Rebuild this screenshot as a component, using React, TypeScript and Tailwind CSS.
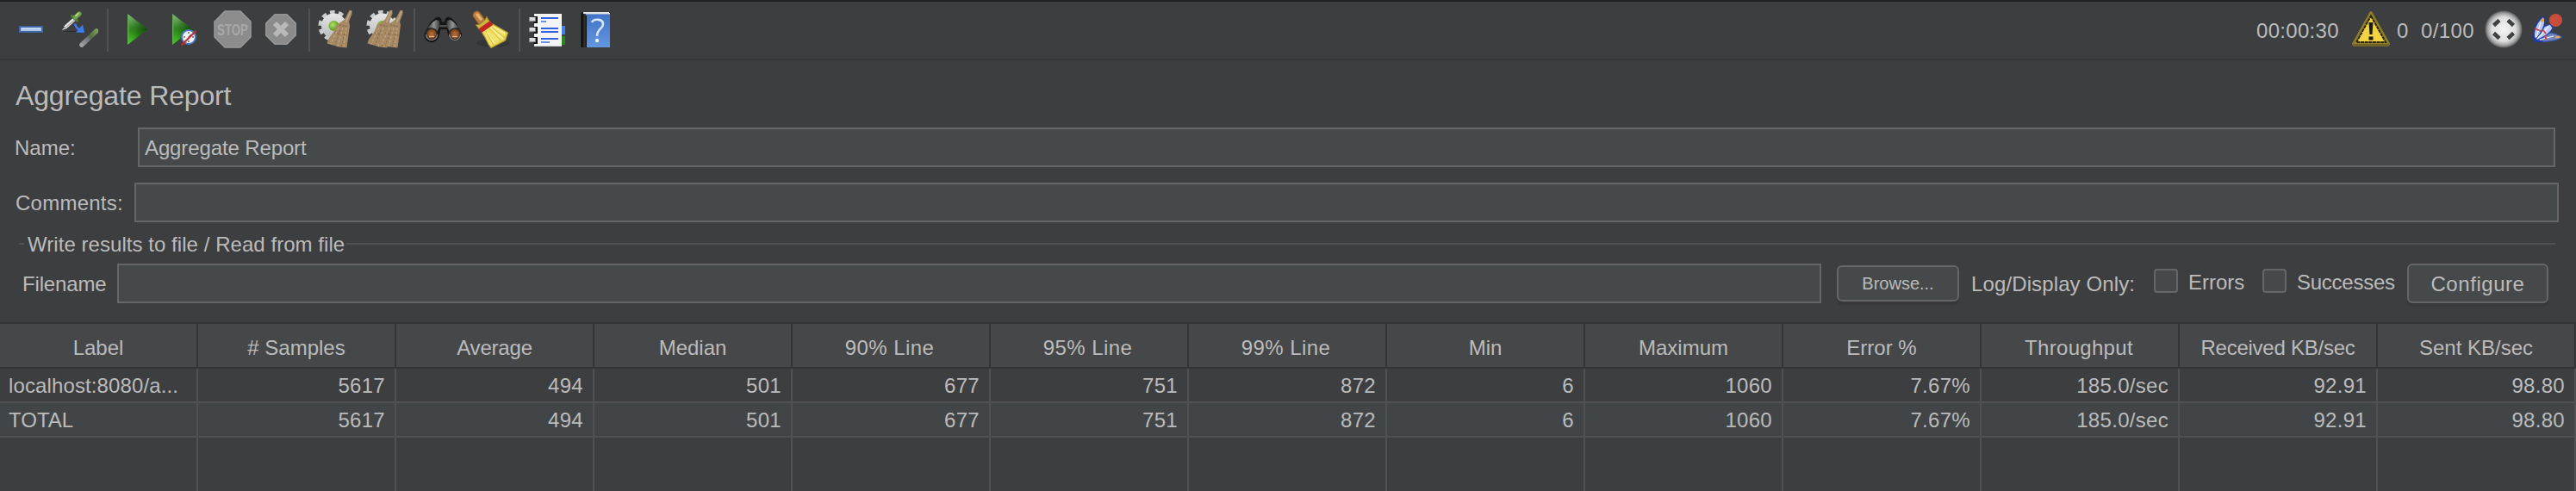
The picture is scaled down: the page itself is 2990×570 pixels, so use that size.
import React from "react";

type IconProps = { children: React.ReactNode; className?: string };

function Icon({ children, className = "" }: IconProps) {
  return (
    <svg viewBox="0 0 44 44" className={`h-11 w-11 shrink-0 ${className}`} fill="none">
      {children}
    </svg>
  );
}

function Separator({ className = "" }: { className?: string }) {
  return <div className={`mt-0.5 h-[50px] w-0.5 shrink-0 bg-[#505254] ${className}`} />;
}

function Gear() {
  return (
    <>
      <circle cx="19.500" cy="18" r="15.800" stroke="#cbcccd" strokeWidth="4.500" strokeDasharray="5.600 4.330" />
      <circle cx="19.500" cy="18" r="14.500" fill="url(#gear)" />
      <circle cx="19.500" cy="18" r="6" fill="url(#lime)" />
    </>
  );
}

function Broom() {
  return (
    <>
      <path
        d="M38.500 0h3v4l-3.500 9 1 4-1 8-2.500 18.500-9-1-14-4 1.500-5 6-8 4-9 5-3 4-3z"
        fill="#a58864"
      />
      <path d="M40 1l-5.500 13" stroke="#bda98a" strokeWidth="1.500" />
      <path d="M27 17l10 2M21 26l15 3" stroke="#86694a" strokeWidth="1.200" strokeDasharray="2 1.500" />
      <path d="M26 20l-9 19M31 20l-6 22M35 20l-3 22" stroke="#c2a47a" strokeWidth="1.300" strokeDasharray="3 2" />
      <path d="M28 23l-7 18M33 27l-4 15" stroke="#80643f" strokeWidth="0.900" strokeDasharray="2 2.500" />
    </>
  );
}

function Gradients() {
  return (
    <svg width="0" height="0" className="absolute">
      <defs>
        <linearGradient id="green" x1="0" y1="0" x2="0" y2="1">
          <stop offset="0" stopColor="#86b87c" />
          <stop offset="0.45" stopColor="#37852a" />
          <stop offset="0.55" stopColor="#2f8a1d" />
          <stop offset="1" stopColor="#49cc28" />
        </linearGradient>
        <linearGradient id="greenShade" x1="0" y1="0" x2="1" y2="0">
          <stop offset="0.2" stopColor="#0d4a06" stopOpacity="0" />
          <stop offset="1" stopColor="#0d3a06" stopOpacity="0.85" />
        </linearGradient>
        <linearGradient id="book" x1="0" y1="0" x2="0" y2="1">
          <stop offset="0" stopColor="#3f74c6" />
          <stop offset="1" stopColor="#6496e0" />
        </linearGradient>
        <linearGradient id="spine" x1="0" y1="0" x2="1" y2="0">
          <stop offset="0" stopColor="#4a4a4a" />
          <stop offset="0.3" stopColor="#0a0a0a" />
          <stop offset="0.7" stopColor="#333" />
          <stop offset="1" stopColor="#111" />
        </linearGradient>
        <radialGradient id="ball">
          <stop offset="0" stopColor="#f4f4f4" />
          <stop offset="0.65" stopColor="#dedede" />
          <stop offset="0.85" stopColor="#a6a6a6" />
          <stop offset="1" stopColor="#5c5d5e" />
        </radialGradient>
        <radialGradient id="lime" cx="0.4" cy="0.4">
          <stop offset="0" stopColor="#b4e070" />
          <stop offset="1" stopColor="#62a51c" />
        </radialGradient>
        <linearGradient id="gear" x1="0" y1="0" x2="0" y2="1">
          <stop offset="0" stopColor="#e6e6e6" />
          <stop offset="1" stopColor="#b9babb" />
        </linearGradient>
        <radialGradient id="lens">
          <stop offset="0" stopColor="#b5733d" />
          <stop offset="0.7" stopColor="#84491f" />
          <stop offset="1" stopColor="#4c2810" />
        </radialGradient>
        <linearGradient id="barrel" x1="0" y1="0" x2="1" y2="0">
          <stop offset="0" stopColor="#333" />
          <stop offset="0.5" stopColor="#929494" />
          <stop offset="1" stopColor="#303030" />
        </linearGradient>
        <linearGradient id="straw" x1="0" y1="0" x2="1" y2="1">
          <stop offset="0" stopColor="#eedc58" />
          <stop offset="0.6" stopColor="#f1e36d" />
          <stop offset="1" stopColor="#cdb531" />
        </linearGradient>
        <linearGradient id="faded" gradientUnits="userSpaceOnUse" x1="42" y1="23" x2="23" y2="42">
          <stop offset="0" stopColor="#7fa860" />
          <stop offset="0.4" stopColor="#54703f" />
          <stop offset="0.5" stopColor="#77797a" />
          <stop offset="1" stopColor="#b5b5b5" />
        </linearGradient>
      </defs>
    </svg>
  );
}

function Toolbar() {
  return (
    <header className="flex h-[70px] items-center border-t-2 border-b-2 border-t-[#1f2022] border-b-[#353638] pr-[15px] pb-0.5 pl-[14px]">
      <Gradients />

      <Icon>
        <rect x="9" y="19" width="26" height="6" fill="#adc6ea" stroke="#3f65a5" strokeWidth="2" />
        <path d="M11 20.800h22" stroke="#c9daf3" strokeWidth="1.600" />
      </Icon>
      <Icon className="ml-3">
        <path d="M6 24.500h15" stroke="#292b2b" strokeWidth="1" />
        <path d="M16 10.500L5.500 20" stroke="#e6e6e7" strokeWidth="4.200" />
        <path d="M7 18L1.500 23l5-1.500z" fill="#e6e6e7" />
        <path d="M16 11.500L5 21" stroke="#8b8d8e" strokeWidth="1" />
        <path d="M13.500 6.500l6 5.500" stroke="#4f7a33" strokeWidth="3.200" strokeLinecap="round" />
        <path d="M17.500 8L22 4" stroke="#6f9e48" strokeWidth="5.200" strokeLinecap="round" />
        <path d="M18 6.500L21 3.500" stroke="#b4d690" strokeWidth="1.800" strokeLinecap="round" />
        <path d="M17 15.500c1 4 2.500 6 6 7.500" stroke="#3f79ee" strokeWidth="2.500" />
        <path d="M26 16.500l2 9.500-10-.5z" fill="#3e7cf2" />
        <path d="M42 24L25 40" stroke="url(#faded)" strokeWidth="5.500" strokeLinecap="round" opacity="0.900" />
      </Icon>
      <Separator className="ml-2.5" />
      <Icon className="ml-3">
        <path d="M10 4l23.500 18L10 40z" fill="url(#green)" />
        <path d="M10 4l23.500 18L10 40z" fill="url(#greenShade)" />
        <path d="M10.700 5v34" stroke="#65ad55" strokeWidth="1.400" />
      </Icon>
      <Icon className="ml-2.5">
        <path d="M8 4l23.500 18L8 40z" fill="url(#green)" />
        <path d="M8 4l23.500 18L8 40z" fill="url(#greenShade)" />
        <path d="M8.700 5v34" stroke="#65ad55" strokeWidth="1.400" />
        <circle cx="27" cy="31" r="8" fill="#f1f4fa" stroke="#4d79ba" strokeWidth="2" />
        <path d="M27 25v2M27 35v2M21 31h2M31 31h2M27 31l3-3" stroke="#686d76" strokeWidth="1.500" />
        <path d="M18.500 40.500L35.500 24" stroke="#c52d30" strokeWidth="2.200" />
      </Icon>
      <Icon className="ml-3">
        <path d="M13 1h18l12 12v18L31 43H13L1 31V13z" fill="#8c8c8c" stroke="#999" strokeWidth="1.500" />
        <text
          x="4"
          y="29"
          textLength="36"
          lengthAdjust="spacingAndGlyphs"
          fontSize="19"
          fontWeight="bold"
          fontFamily="Liberation Sans, sans-serif"
          fill="#a8a8a8"
        >
          STOP
        </text>
      </Icon>
      <Icon className="ml-3">
        <path d="M15 4h14l11 11v14L29 40H15L4 29V15z" fill="#8b8b8b" />
        <path d="M15 5h14l10 10v14L29 39H15L5 29V15z" stroke="#979797" strokeWidth="1.500" />
        <path d="M15 15l14 14M29 15L15 29" stroke="#b9b9b9" strokeWidth="6" />
      </Icon>
      <Separator className="ml-2.5" />
      <Icon className="ml-2">
        <Gear />
        <g transform="translate(-1 0)">
          <Broom />
        </g>
      </Icon>
      <Icon className="ml-3">
        <Gear />
        <g transform="translate(-10 0)">
          <Broom />
        </g>
        <g transform="translate(2 0)">
          <Broom />
        </g>
      </Icon>
      <Separator className="ml-3" />
      <Icon className="ml-2.5">
        <path
          d="M13 9l4-1.500 3 2 1 4h3l1-4 3-2 4 1.500 5 5 7 13a8 8 0 0 1-15.500 3l-2-8h-7l-2 8A8 8 0 0 1 .5 27l7-13z"
          fill="#151515"
        />
        <path d="M10 14l4-3 4 1 1 6-4 7-5-4-6-.5z" fill="url(#barrel)" />
        <path d="M35 14l-4-3-4 1-1 6 4 7 5-4 6-.5z" fill="url(#barrel)" />
        <path d="M18.500 17h8v2.500h-8z" fill="#4c4e4e" />
        <circle cx="9" cy="27.500" r="6.500" fill="url(#lens)" stroke="#2a2a2a" strokeWidth="1.500" />
        <circle cx="36" cy="27.500" r="6.500" fill="url(#lens)" stroke="#2a2a2a" strokeWidth="1.500" />
        <path d="M2.500 28a6.500 6.500 0 0 0 13 0M29.500 28a6.500 6.500 0 0 0 13 0" stroke="#8b8d8d" strokeWidth="1.200" />
        <path d="M6 30.500h6M33 30.500h6" stroke="#dfb184" strokeWidth="1.600" />
      </Icon>
      <Icon className="ml-3">
        <ellipse cx="24" cy="38" rx="19" ry="4.500" fill="#343536" />
        <path d="M5.500 5.500L11 13" stroke="#885520" strokeWidth="10" strokeLinecap="round" />
        <path d="M5.500 5.500L11 13" stroke="#bd7e3d" strokeWidth="8" strokeLinecap="round" />
        <path d="M6 5l4 5" stroke="#e2b478" strokeWidth="3.500" strokeLinecap="round" />
        <path d="M4 17l5-1 6-5 2-4 2 4 3 3-13 9z" fill="#cdb83f" stroke="#8a7727" strokeWidth="1" />
        <path
          d="M11 25l13-9 17.500 10-3 9-16.500 8.500-3-4-4-8z"
          fill="url(#straw)"
          stroke="#ae982d"
          strokeWidth="1.200"
        />
        <path d="M20 21l14 15M16 24l9 17M23 20l15 12" stroke="#cdb83c" strokeWidth="0.900" />
        <path d="M21 20l15 13M17 25l9 13M25 19l13 8" stroke="#fbf39f" strokeWidth="1.200" />
        <path d="M8 21l13-9 3 5-13 9z" fill="#c22526" />
      </Icon>
      <Separator className="ml-2.5" />
      <Icon className="ml-2.5">
        <path d="M36 18h6v10h-6z" fill="#3d83eb" />
        <path d="M36 30h6v10h-6z" fill="#238a18" />
        <path d="M6 4h32v38H6z" fill="#f4f4f4" />
        <path d="M6 41.500h32" stroke="#cfd0d0" strokeWidth="1" />
        {[7, 19, 31].map((y) => (
          <g key={y}>
            <path d={`M5 ${y}h5v8H5z`} fill="#141414" />
            <path d={`M0.500 ${y + 1}h7v5h-7z`} fill="#dedede" />
            <path d={`M0 ${y + 5.5}h7`} stroke="#8d8f8f" strokeWidth="1.300" />
          </g>
        ))}
        <path d="M14 9h20M14 21h20M14 25h20M14 33h20" stroke="#2f62dc" strokeWidth="2" />
        <path d="M14 13h6M14 37h10" stroke="#6b91e6" strokeWidth="2" />
      </Icon>
      <Icon className="ml-3">
        <path d="M10 3h28v3H10z" fill="#d3d6da" />
        <path d="M10 4.500h28V43H10z" fill="url(#book)" />
        <path d="M3 5l3-3h3v4h2v37H3z" fill="url(#spine)" />
        <path d="M7 3h30" stroke="#e0e2e4" strokeWidth="2" />
        <path d="M17 14c2-4.500 13-4.500 13 2 0 5.500-7 5-7 14" stroke="#d9e5f8" strokeWidth="2.600" />
        <circle cx="23" cy="35" r="2.200" fill="#eaf1fc" />
      </Icon>

      <div className="flex-1" />

      <span className="w-[111px] pt-1 tracking-[0.300px]">00:00:30</span>
      <Icon>
        <path d="M22 2.500L42.500 39H1.500z" fill="#f2d344" stroke="#8e7d26" strokeWidth="3" strokeLinejoin="round" />
        <path d="M1 40.500h42" stroke="#6f6329" strokeWidth="3" />
        <path d="M22 6.500L39 37H5z" stroke="#27240f" strokeWidth="2" strokeDasharray="4 0.600" />
        <path d="M19.500 14h5l-1 14h-3zM19.500 30.500h5v4h-5z" fill="#1d1b10" />
      </Icon>
      <span className="w-[28px] pt-1 pl-2">0</span>
      <span className="ml-2 w-[74px] pt-1 tracking-[0.400px]">0/100</span>
      <Icon>
        <circle cx="22" cy="22" r="21.500" fill="url(#ball)" />
        <path
          d="M10.500 17.500l6.500-6M33.500 17.500l-6.500-6M10.500 26.500l6.500 6M33.500 26.500l-6.500 6"
          stroke="#3f4142"
          strokeWidth="4.600"
        />
      </Icon>
      <Icon className="ml-[3px]">
        <path
          d="M11 35C20 25 30 25 37 28l5.500 3c-4 4-20 7-31.500 4z"
          fill="#7786b8"
          stroke="#3556ad"
          strokeWidth="1.300"
        />
        <path d="M11 34C14 24 22 18 29 16l3 4c-2 7-12 12-20 15z" fill="#b9cbf6" stroke="#2445b0" strokeWidth="1.300" />
        <path d="M11 35C8 24 14 11 21.500 7.500 26 14 19 27 11 35z" fill="#b3c6f6" stroke="#1f3da0" strokeWidth="1.500" />
        <path d="M8.500 27l4 8 8 1.500-9-.5z" fill="#1b3aa8" stroke="#1b3aa8" strokeWidth="1.500" />
        <path d="M20.500 8l1.500 4-3 2-1-3z" fill="#f09a2c" />
        <path d="M36 31h3.500" stroke="#e1a658" strokeWidth="2.500" strokeLinecap="round" />
        <path d="M18 14l-5 17M27 19L14 33M33 30l-16 4" stroke="#eef2ff" strokeWidth="1.200" />
        <path d="M11 21l8 3.500M20 22l4 5M23 29l1.500 5" stroke="#d03f48" strokeWidth="1.800" />
        <circle cx="35.500" cy="11.500" r="7.600" fill="#c94d3c" />
      </Icon>
    </header>
  );
}

function CheckBox({ label, className = "" }: { label: string; className?: string }) {
  return (
    <label className={`flex items-center ${className}`}>
      <span className="mb-1.5 h-7 w-7 rounded-[4px] border-2 border-[#646668] bg-[#45494a]" />
      <span className="mb-0.5 ml-[12px]">{label}</span>
    </label>
  );
}

const FIELD = "h-[46px] border-2 border-[#646668] bg-[#45494a]";

const COLUMNS = [
  { title: "Label", style: "" },
  { title: "# Samples", style: "" },
  { title: "Average", style: "tracking-[-0.200px]" },
  { title: "Median", style: "" },
  { title: "90% Line", style: "tracking-[0.400px] pr-[3px]" },
  { title: "95% Line", style: "tracking-[0.400px] pr-[3px]" },
  { title: "99% Line", style: "tracking-[0.400px] pr-[3px]" },
  { title: "Min", style: "" },
  { title: "Maximum", style: "" },
  { title: "Error %", style: "" },
  { title: "Throughput", style: "tracking-[0.300px] pr-[2px]" },
  { title: "Received KB/sec", style: "tracking-[-0.250px]" },
  { title: "Sent KB/sec", style: "" },
];

const VALUES = ["5617", "494", "501", "677", "751", "872", "6", "1060", "7.67%", "185.0/sec", "92.91", "98.80"];

function Row({ label, className }: { label: string; className: string }) {
  return (
    <div className={`grid h-10 grid-cols-13 border-b-2 border-[#4f5153] ${className}`}>
      <div className="border-r-2 border-[#4f5153] pl-[10px] leading-[39px] whitespace-nowrap">{label}</div>
      {VALUES.map((value, i) => (
        <div
          key={i}
          className="border-r-2 border-[#4f5153] pr-[11px] text-right leading-[39px] tracking-[0.300px]"
        >
          {value}
        </div>
      ))}
    </div>
  );
}

export default function App() {
  return (
    <div className="flex h-[570px] w-[2990px] flex-col overflow-hidden bg-[#3d3e40] font-['Liberation_Sans',Arial,sans-serif] text-[24px] leading-[28px] text-[#bbbbbb]">
      <Toolbar />

      <main className="flex flex-col">
        <h1 className="mt-[20px] ml-[18px] h-[58px] text-[32px] leading-[42px] tracking-[-0.140px]">
          Aggregate Report
        </h1>

        <div className="flex items-center pr-6 pl-[17px]">
          <span className="w-[143px] pt-0.5">Name:</span>
          <div className={`${FIELD} flex-1 pl-[6px] leading-[44px] tracking-[-0.120px]`}>Aggregate Report</div>
        </div>

        <div className="mt-[18px] flex items-center pr-5 pl-[18px]">
          <span className="w-[138px] pt-0.5 tracking-[0.250px]">Comments:</span>
          <div className={`${FIELD} flex-1`} />
        </div>

        <div className="mt-[9px] flex h-8 items-center pr-6 pl-[22px]">
          <span className="h-0.5 w-[6px] bg-[#505254]" />
          <span className="ml-1 w-[370px] pt-0.5 tracking-[0.050px] whitespace-nowrap">
            Write results to file / Read from file
          </span>
          <span className="h-0.5 flex-1 bg-[#505254]" />
        </div>

        <div className="mt-[7px] flex h-[46px] items-center pr-8 pl-[26px]">
          <span className="w-[110px] pt-0.5 tracking-[-0.150px]">Filename</span>
          <div className={`${FIELD} w-[1978px]`} />
          <button className="ml-[18px] h-[42px] w-[142px] rounded-[6px] border-2 border-[#646668] bg-[#45494a] text-[20px] leading-[38px] shadow-[0_4px_0_#37383a]">
            Browse...
          </button>
          <span className="ml-[14px] w-[212px] pt-0.5 tracking-[0.120px]">Log/Display Only:</span>
          <CheckBox label="Errors" className="w-[126px]" />
          <CheckBox label="Successes" className="w-[168px] tracking-[-0.250px]" />
          <button className="h-[46px] w-[164px] rounded-[6px] border-2 border-[#646668] bg-[#45494a] pt-0.5 leading-[40px] tracking-[0.550px] shadow-[0_4px_0_#37383a]">
            Configure
          </button>
        </div>
      </main>

      <section className="mt-[22px] flex flex-1 flex-col border-t-2 border-[#333436]">
        <div className="grid h-[52px] grid-cols-13 border-b-2 border-[#333436] bg-[#464749]">
          {COLUMNS.map(({ title, style }) => (
            <div key={title} className={`border-r-2 border-[#333436] pt-1 text-center leading-[48px] ${style}`}>
              {title}
            </div>
          ))}
        </div>
        <Row label="localhost:8080/a..." className="tracking-[0.120px]" />
        <Row label="TOTAL" className="bg-[#414547]" />
        <div className="grid flex-1 grid-cols-13">
          {COLUMNS.map(({ title }) => (
            <div key={title} className="border-r-2 border-[#4f5153]" />
          ))}
        </div>
      </section>
    </div>
  );
}
